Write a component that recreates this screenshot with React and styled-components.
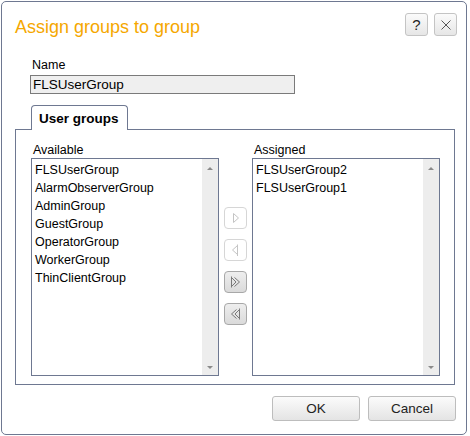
import React from 'react';
import styled, { createGlobalStyle } from 'styled-components';

const GlobalStyle = createGlobalStyle`
  html, body {
    margin: 0;
    padding: 0;
    background: #ffffff;
  }
  body {
    font-family: "Liberation Sans", Arial, sans-serif;
    color: #000;
  }
`;

const Dialog = styled.div`
  box-sizing: border-box;
  width: 466px;
  height: 434px;
  margin: 1px 0 0 1px;
  border: 1px solid #6e7891;
  border-radius: 5px;
  background: #fff;
  display: flex;
  flex-direction: column;
`;

const Header = styled.div`
  display: flex;
  justify-content: space-between;
  align-items: flex-start;
  padding: 11px 9px 0 13px;
`;

const Title = styled.h1`
  margin: 3px 0 0;
  font-size: 18px;
  line-height: 22px;
  font-weight: normal;
  color: #f5a700;
`;

const HeaderButtons = styled.div`
  display: flex;
  gap: 6px;
`;

const IconButton = styled.button`
  box-sizing: border-box;
  width: 23px;
  height: 23px;
  padding: 0;
  border: 1px solid #c4c4c4;
  border-radius: 3px;
  background: linear-gradient(#fbfbfb, #e6e6e6);
  display: flex;
  align-items: center;
  justify-content: center;
  font-family: "Liberation Sans", Arial, sans-serif;
  font-size: 15px;
  color: #222;
`;

const NameBlock = styled.div`
  margin: 20px 0 0 28px;
  display: flex;
  flex-direction: column;
`;

const Label = styled.div`
  font-size: 12.5px;
  line-height: 15px;
  padding-left: 2px;
`;

const NameInput = styled.div`
  box-sizing: border-box;
  margin-top: 2px;
  width: 265px;
  height: 19px;
  border: 1px solid #7a7a7a;
  background: #efefef;
  font-size: 13.5px;
  line-height: 17px;
  padding-left: 2px;
`;

const TabBar = styled.div`
  display: flex;
  margin: 11px 0 0 29px;
`;

const Tab = styled.div`
  box-sizing: border-box;
  position: relative;
  z-index: 1;
  width: 97px;
  height: 25px;
  margin-bottom: -1px;
  border: 1px solid #6e7891;
  border-bottom: none;
  border-radius: 4px 4px 0 0;
  background: #fff;
  font-weight: bold;
  font-size: 13.5px;
  line-height: 22px;
  padding: 2px 0 0 7px;
`;

const Panel = styled.div`
  box-sizing: border-box;
  width: 440px;
  height: 256px;
  margin-left: 13px;
  border: 1px solid #6e7891;
  padding: 13px 15px 0;
  display: flex;
  align-items: flex-start;
`;

const Column = styled.div`
  display: flex;
  flex-direction: column;
`;

const ListBox = styled.div`
  box-sizing: border-box;
  width: 188px;
  height: 218px;
  border: 1px solid #6e7891;
  display: flex;
`;

const Items = styled.div`
  flex: 1;
  padding: 2px 0 0 3px;
`;

const Item = styled.div`
  font-size: 12.5px;
  line-height: 18px;
  white-space: nowrap;
`;

const Scrollbar = styled.div`
  width: 16px;
  background: #ededed;
  display: flex;
  flex-direction: column;
  justify-content: space-between;
  align-items: center;
  padding: 8px 0 6px;
`;

const Arrow = styled.div`
  width: 0;
  height: 0;
  border-left: 3px solid transparent;
  border-right: 3px solid transparent;
  ${(p) => (p.down ? 'border-top: 3px solid #8a8a8a;' : 'border-bottom: 3px solid #8a8a8a;')}
`;

const Movers = styled.div`
  display: flex;
  flex-direction: column;
  gap: 10px;
  margin: 64px 5px 0;
`;

const MoveButton = styled.button`
  box-sizing: border-box;
  width: 23px;
  height: 22px;
  padding: 0;
  border-radius: 4px;
  display: flex;
  align-items: center;
  justify-content: center;
  border: 1px solid ${(p) => (p.disabled ? '#d6d6d6' : '#a8a8a8')};
  background: ${(p) => (p.disabled ? '#ffffff' : 'linear-gradient(#eeeeee, #dadada)')};
`;

const Footer = styled.div`
  display: flex;
  justify-content: flex-end;
  gap: 8px;
  padding: 11px 10px 0 0;
`;

const DialogButton = styled.button`
  box-sizing: border-box;
  width: 88px;
  height: 25px;
  border: 1px solid #bdbdbd;
  border-radius: 3px;
  background: linear-gradient(#fbfbfb, #e4e4e4);
  font-family: "Liberation Sans", Arial, sans-serif;
  font-size: 13.5px;
  color: #222;
`;

const available = [
  'FLSUserGroup',
  'AlarmObserverGroup',
  'AdminGroup',
  'GuestGroup',
  'OperatorGroup',
  'WorkerGroup',
  'ThinClientGroup',
];
const assigned = ['FLSUserGroup2', 'FLSUserGroup1'];

function List({ items }) {
  return (
    <ListBox>
      <Items>
        {items.map((i) => (
          <Item key={i}>{i}</Item>
        ))}
      </Items>
      <Scrollbar>
        <Arrow />
        <Arrow down />
      </Scrollbar>
    </ListBox>
  );
}

function MoveIcon({ kind, color }) {
  const s = { fill: 'none', stroke: color, strokeWidth: 1 };
  return (
    <svg width="13" height="14" viewBox="0 0 13 14">
      {kind === 'right' && <path d="M4.5 2.5 L9.5 7 L4.5 11.5 Z" {...s} />}
      {kind === 'left' && (
        <>
          <path d="M8.5 2.5 L3.5 7 L8.5 11.5 Z" {...s} />
          <path d="M8.5 1.5 V13" {...s} />
        </>
      )}
      {kind === 'allRight' && (
        <>
          <path d="M2.5 1.5 V12.5" {...s} />
          <path d="M2.5 2.5 L7 7 L2.5 11.5" {...s} />
          <path d="M5.5 2.5 L10.5 7 L5.5 11.5" {...s} />
        </>
      )}
      {kind === 'allLeft' && (
        <>
          <path d="M10.5 1.5 V12.5" {...s} />
          <path d="M10.5 2.5 L6 7 L10.5 11.5" {...s} />
          <path d="M7.5 2.5 L2.5 7 L7.5 11.5" {...s} />
        </>
      )}
    </svg>
  );
}

export default function App() {
  return (
    <>
      <GlobalStyle />
      <Dialog>
        <Header>
          <Title>Assign groups to group</Title>
          <HeaderButtons>
            <IconButton>?</IconButton>
            <IconButton>
              <svg width="12" height="12" viewBox="0 0 12 12">
                <path d="M1.5 1.5 L10.5 10.5 M10.5 1.5 L1.5 10.5" stroke="#555" strokeWidth="1" fill="none" />
              </svg>
            </IconButton>
          </HeaderButtons>
        </Header>

        <NameBlock>
          <Label>Name</Label>
          <NameInput>FLSUserGroup</NameInput>
        </NameBlock>

        <TabBar>
          <Tab>User groups</Tab>
        </TabBar>
        <Panel>
          <Column>
            <Label>Available</Label>
            <List items={available} />
          </Column>
          <Movers>
            <MoveButton disabled>
              <MoveIcon kind="right" color="#c4c4c4" />
            </MoveButton>
            <MoveButton disabled>
              <MoveIcon kind="left" color="#c4c4c4" />
            </MoveButton>
            <MoveButton>
              <MoveIcon kind="allRight" color="#7a7a7a" />
            </MoveButton>
            <MoveButton>
              <MoveIcon kind="allLeft" color="#7a7a7a" />
            </MoveButton>
          </Movers>
          <Column>
            <Label>Assigned</Label>
            <List items={assigned} />
          </Column>
        </Panel>

        <Footer>
          <DialogButton>OK</DialogButton>
          <DialogButton>Cancel</DialogButton>
        </Footer>
      </Dialog>
    </>
  );
}
